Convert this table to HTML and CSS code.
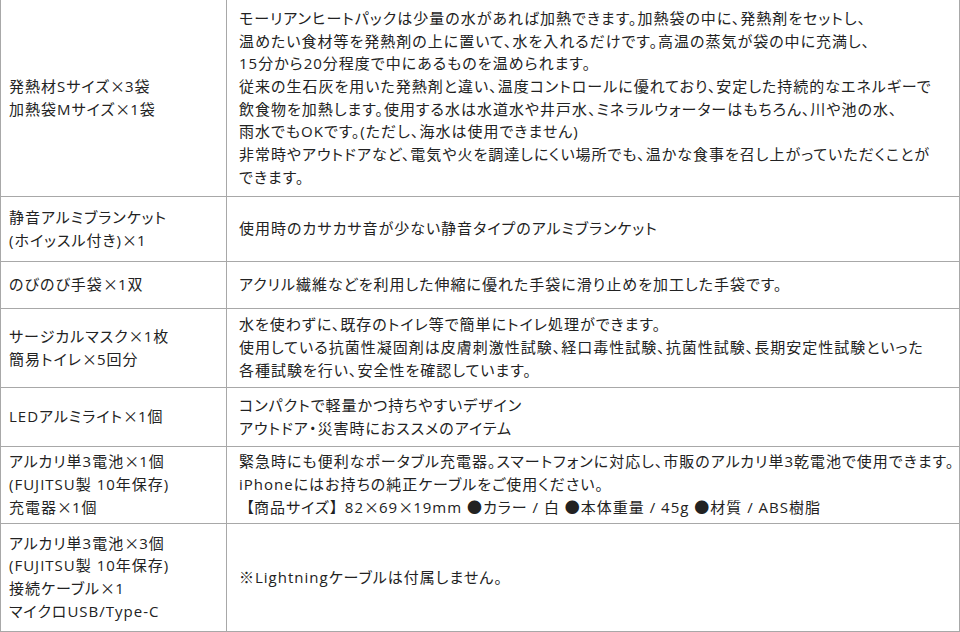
FILE: index.html
```html
<!DOCTYPE html>
<html lang="ja">
<head>
<meta charset="utf-8">
<link rel="stylesheet" href="styles.css">
</head>
<body>
<table class="spec">
  <tr class="r1">
    <td class="item">発熱材Sサイズ<span class="x">×</span>3袋<br>加熱袋Mサイズ<span class="x">×</span>1袋</td>
    <td class="desc">モーリアンヒートパックは少量の水があれば加熱できます。加熱袋の中に、発熱剤をセットし、<br>温めたい食材等を発熱剤の上に置いて、水を入れるだけです。高温の蒸気が袋の中に充満し、<br>15分から20分程度で中にあるものを温められます。<br>従来の生石灰を用いた発熱剤と違い、温度コントロールに優れており、安定した持続的なエネルギーで<br>飲食物を加熱します。使用する水は水道水や井戸水、ミネラルウォーターはもちろん、川や池の水、<br>雨水でもOKです。(ただし、海水は使用できません)<br>非常時やアウトドアなど、電気や火を調達しにくい場所でも、温かな食事を召し上がっていただくことが<br>できます。</td>
  </tr>
  <tr class="r2">
    <td class="item">静音アルミブランケット<br>(ホイッスル付き)<span class="x">×</span>1</td>
    <td class="desc">使用時のカサカサ音が少ない静音タイプのアルミブランケット</td>
  </tr>
  <tr class="r3">
    <td class="item">のびのび手袋<span class="x">×</span>1双</td>
    <td class="desc">アクリル繊維などを利用した伸縮に優れた手袋に滑り止めを加工した手袋です。</td>
  </tr>
  <tr class="r4">
    <td class="item">サージカルマスク<span class="x">×</span>1枚<br>簡易トイレ<span class="x">×</span>5回分</td>
    <td class="desc">水を使わずに、既存のトイレ等で簡単にトイレ処理ができます。<br>使用している抗菌性凝固剤は皮膚刺激性試験、経口毒性試験、抗菌性試験、長期安定性試験といった<br>各種試験を行い、安全性を確認しています。</td>
  </tr>
  <tr class="r5">
    <td class="item">LEDアルミライト<span class="x">×</span>1個</td>
    <td class="desc">コンパクトで軽量かつ持ちやすいデザイン<br>アウトドア・災害時におススメのアイテム</td>
  </tr>
  <tr class="r6">
    <td class="item">アルカリ単3電池<span class="x">×</span>1個<br>(FUJITSU製 10年保存)<br>充電器<span class="x">×</span>1個</td>
    <td class="desc">緊急時にも便利なポータブル充電器。スマートフォンに対応し、市販のアルカリ単3乾電池で使用できます。<br>iPhoneにはお持ちの純正ケーブルをご使用ください。<br><span class="br">【</span>商品サイズ<span class="br">】</span>82<span class="x">×</span>69<span class="x">×</span>19mm ●カラー / 白 ●本体重量 / 45g ●材質 / ABS樹脂</td>
  </tr>
  <tr class="r7">
    <td class="item">アルカリ単3電池<span class="x">×</span>3個<br>(FUJITSU製 10年保存)<br>接続ケーブル<span class="x">×</span>1<br>マイクロUSB/Type-C</td>
    <td class="desc">※Lightningケーブルは付属しません。</td>
  </tr>
</table>
</body>
</html>
```
FILE: styles.css
```css
html, body {
  margin: 0;
  padding: 0;
  background: #fff;
}
.spec {
  width: 960px;
  border-collapse: collapse;
  font-family: "Open Sans", "Noto Sans CJK JP", sans-serif;
  font-size: 15px;
  line-height: 22.7px;
  color: #222;
  font-feature-settings: "palt";
  letter-spacing: 1px;
  table-layout: fixed;
}
.spec td {
  border: 1px solid #a8a8a8;
  vertical-align: middle;
  padding: 0;
  white-space: nowrap;
}
.spec tr:first-child td {
  border-top: none;
}
.item {
  width: 217px;
  padding-left: 8px !important;
}
.desc {
  padding-left: 12px !important;
}
.x {
  font-family: "Noto Sans CJK JP", sans-serif;
  letter-spacing: 0;
}
.br {
  font-family: "Noto Sans CJK JP", sans-serif;
  font-feature-settings: normal;
  letter-spacing: 0;
}
.r1 { height: 196px; }
.r2 { height: 65px; }
.r3 { height: 47px; }
.r4 { height: 79px; }
.r5 { height: 59px; }
.r6 { height: 77px; }
.r7 { height: 108px; }
```
